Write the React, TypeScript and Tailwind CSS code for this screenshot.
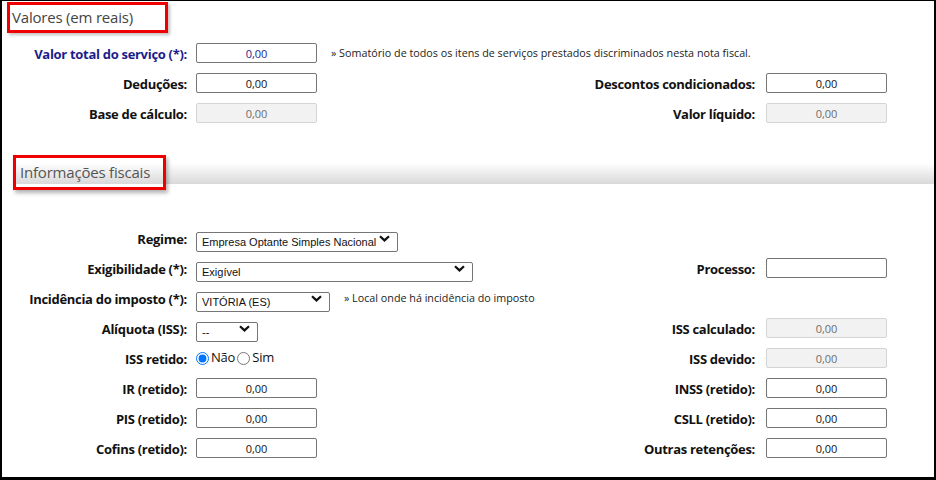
import React from "react";

const labelCls = "text-right font-bold text-[13px] tracking-[-0.3px] leading-[20px] pt-[2px] text-[#111] whitespace-nowrap";
const inputCls =
  "h-[20px] w-[121px] rounded-[2px] border border-[#767676] bg-white text-center text-[11px] text-[#111] outline-none";
const disabledCls =
  "h-[20px] w-[121px] rounded-[2px] border border-[#d4d4d4] bg-[#f2f2f2] text-center text-[11px] text-[#6d6d6d] outline-none";
const hintCls = "ml-[14px] pt-[1px] text-[10.75px] text-[#222] whitespace-nowrap";

function Chevron() {
  return (
    <svg width="11" height="7" viewBox="0 0 11 7" className="pointer-events-none absolute right-[8px] top-[7px]">
      <path d="M1 1.2 L5.5 5.4 L10 1.2" fill="none" stroke="#111" strokeWidth="2.2" />
    </svg>
  );
}

function Select({ value, width }: { value: string; width: string }) {
  return (
    <div className={`relative h-[20px] ${width}`}>
      <select
        defaultValue={value}
        className="h-full w-full appearance-none rounded-[2px] border border-[#767676] bg-white pl-[5px] pr-[20px] text-[11px] text-[#111] outline-none"
        style={{ fontFamily: '"Liberation Sans", Arial, sans-serif' }}
      >
        <option>{value}</option>
      </select>
      <Chevron />
    </div>
  );
}

function Field({ disabled, value = "0,00" }: { disabled?: boolean; value?: string }) {
  return <input readOnly disabled={disabled} defaultValue={value} className={disabled ? disabledCls : inputCls} />;
}

// linha com coluna esquerda e (opcional) coluna direita
function Row({
  label,
  left,
  rightLabel,
  right,
  labelColor,
}: {
  label: string;
  left: React.ReactNode;
  rightLabel?: string;
  right?: React.ReactNode;
  labelColor?: string;
}) {
  return (
    <div className="flex h-[30px] items-center">
      <div className={`w-[185px] ${labelCls} ${labelColor ?? ""}`}>{label}</div>
      <div className="ml-[9px] flex flex-1 items-center">{left}</div>
      {rightLabel !== undefined && (
        <>
          <div className={labelCls}>{rightLabel}</div>
          <div className="ml-[11px] mr-[47px] flex items-center">{right}</div>
        </>
      )}
    </div>
  );
}

export default function App() {
  return (
    <div
      className="h-[480px] w-[936px] overflow-hidden border-t border-l-2 border-r-2 border-b-[3px] border-black bg-white"
      style={{ fontFamily: '"Open Sans", "Noto Sans", sans-serif' }}
    >
      {/* Valores */}
      <div className="pt-px pl-[5px]">
        <div className="flex h-[31px] w-[161px] items-center border-[3px] border-[#ee0000] pl-[2px] text-[15px] tracking-[-0.2px] text-[#444] shadow-[2px_2px_3px_rgba(0,0,0,0.25)]">
          Valores (em reais)
        </div>
      </div>

      <div className="mt-[5px]">
        <Row
          label="Valor total do serviço (*):"
          labelColor="!text-[#1c1c8a]"
          left={
            <>
              <input readOnly defaultValue="0,00" className={`${inputCls} !text-[#1c1c8a]`} />
              <span className={hintCls}>
                » Somatório de todos os itens de serviços prestados discriminados nesta nota fiscal.
              </span>
            </>
          }
        />
        <Row label="Deduções:" left={<Field />} rightLabel="Descontos condicionados:" right={<Field />} />
        <Row label="Base de cálculo:" left={<Field disabled />} rightLabel="Valor líquido:" right={<Field disabled />} />
      </div>

      {/* Informações fiscais */}
      <div className="relative mt-[27px] h-[35px]">
        <div className="absolute left-[11px] right-0 top-[8px] h-[21px] bg-gradient-to-b from-white to-[#d9d9d9]" />
        <div className="absolute left-[11px] top-0 flex h-[35px] w-[153px] items-center border-[3px] border-[#ee0000] pl-[4px] text-[15px] tracking-[-0.2px] text-[#555] shadow-[2px_3px_4px_rgba(0,0,0,0.3)]">
          Informações fiscais
        </div>
      </div>

      <div className="mt-[33px]">
        <Row label="Regime:" left={<Select value="Empresa Optante Simples Nacional" width="w-[202px]" />} />
        <Row
          label="Exigibilidade (*):"
          left={<Select value="Exigível" width="w-[277px]" />}
          rightLabel="Processo:"
          right={<Field value="" />}
        />
        <Row
          label="Incidência do imposto (*):"
          left={
            <>
              <Select value="VITÓRIA (ES)" width="w-[134px]" />
              <span className={hintCls}>» Local onde há incidência do imposto</span>
            </>
          }
        />
        <Row
          label="Alíquota (ISS):"
          left={<Select value="--" width="w-[62px]" />}
          rightLabel="ISS calculado:"
          right={<Field disabled />}
        />
        <Row
          label="ISS retido:"
          left={
            <div className="flex items-center text-[13px] tracking-[-0.2px] text-[#111]">
              <input type="radio" name="iss" defaultChecked className="m-0 h-[13px] w-[13px] accent-[#0075ff]" />
              <span className="ml-[2px]">Não</span>
              <input type="radio" name="iss" className="m-0 ml-[2px] h-[13px] w-[13px]" />
              <span className="ml-[2px]">Sim</span>
            </div>
          }
          rightLabel="ISS devido:"
          right={<Field disabled />}
        />
        <Row label="IR (retido):" left={<Field />} rightLabel="INSS (retido):" right={<Field />} />
        <Row label="PIS (retido):" left={<Field />} rightLabel="CSLL (retido):" right={<Field />} />
        <Row label="Cofins (retido):" left={<Field />} rightLabel="Outras retenções:" right={<Field />} />
      </div>
    </div>
  );
}
